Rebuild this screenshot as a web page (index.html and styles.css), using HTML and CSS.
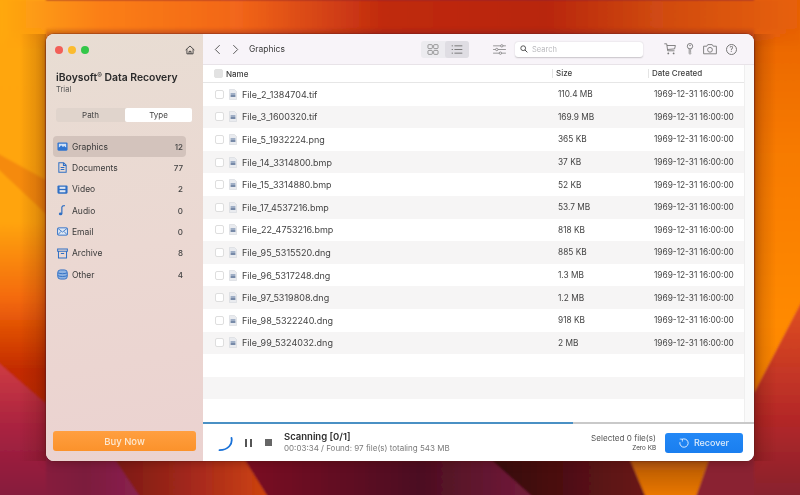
FILE: index.html
```html
<!DOCTYPE html>
<html lang="en">
<head>
<meta charset="utf-8">
<title>iBoysoft Data Recovery</title>
<link rel="stylesheet" href="styles.css">
</head>
<body>
<svg class="wallpaper" viewBox="0 0 800 495" preserveAspectRatio="none" aria-hidden="true">
  <defs>
    <linearGradient id="top" x1="0" x2="1" y1="0" y2="0">
      <stop offset="0" stop-color="#ffab10"/><stop offset=".13" stop-color="#fb7f16"/><stop offset=".3" stop-color="#f2661a"/><stop offset=".48" stop-color="#c02a10"/><stop offset=".68" stop-color="#b8260f"/><stop offset=".82" stop-color="#d04a12"/><stop offset="1" stop-color="#e86206"/>
    </linearGradient>
    <linearGradient id="fade" x1="0" x2="0" y1="0" y2="1">
      <stop offset=".55" stop-color="#fff"/><stop offset="1" stop-color="#000"/>
    </linearGradient>
    <mask id="topmask"><rect width="800" height="50" fill="url(#fade)"/></mask>
    <linearGradient id="left" x1="0" x2="0" y1="0" y2="1">
      <stop offset="0" stop-color="#ffa70c"/><stop offset=".45" stop-color="#ffa408"/><stop offset=".6" stop-color="#f46a08"/><stop offset=".74" stop-color="#c42c04"/><stop offset="1" stop-color="#a82004"/>
    </linearGradient>
    <linearGradient id="right" x1="0" x2="0" y1="0" y2="1">
      <stop offset="0" stop-color="#e66006"/><stop offset=".3" stop-color="#f77a04"/><stop offset=".65" stop-color="#ff8a02"/><stop offset="1" stop-color="#f58000"/>
    </linearGradient>
    <linearGradient id="pink" x1="0" x2="0" y1="0" y2="1">
      <stop offset="0" stop-color="#d03c44"/><stop offset=".5" stop-color="#a82240"/><stop offset="1" stop-color="#841a3c"/>
    </linearGradient>
    <linearGradient id="redright" x1="0" x2="0" y1="0" y2="1">
      <stop offset="0" stop-color="#e25020"/><stop offset=".6" stop-color="#b42828"/><stop offset="1" stop-color="#85202e"/>
    </linearGradient>
    <linearGradient id="wedge" x1="0" x2="0" y1="0" y2="1">
      <stop offset="0" stop-color="#a85208"/><stop offset="1" stop-color="#f27c04"/>
    </linearGradient>
    <linearGradient id="ember" x1="0" x2="1" y1="0" y2="0">
      <stop offset="0" stop-color="#7a1a14"/><stop offset=".55" stop-color="#a82a1c"/><stop offset="1" stop-color="#cf440e"/>
    </linearGradient>
    <linearGradient id="wine" x1="0" x2="1" y1="0" y2="0">
      <stop offset="0" stop-color="#7c0c24"/><stop offset=".6" stop-color="#4c0f20"/><stop offset="1" stop-color="#741c3c"/>
    </linearGradient>
    <linearGradient id="dark" x1="0" x2="1" y1="0" y2="0">
      <stop offset="0" stop-color="#320a0c"/><stop offset="1" stop-color="#6a1618"/>
    </linearGradient>
    <linearGradient id="magenta" x1="0" x2="1" y1="0" y2="0">
      <stop offset="0" stop-color="#861a3c"/><stop offset=".4" stop-color="#7c1a3c"/><stop offset="1" stop-color="#8a2250"/>
    </linearGradient>
    <linearGradient id="shadeL" x1="0" x2="1" y1="0" y2="0">
      <stop offset="0" stop-color="#4a1000" stop-opacity="0"/><stop offset="1" stop-color="#4a1000" stop-opacity=".22"/>
    </linearGradient>
    <linearGradient id="shadeR" x1="0" x2="1" y1="0" y2="0">
      <stop offset="0" stop-color="#4a1000" stop-opacity=".22"/><stop offset="1" stop-color="#4a1000" stop-opacity="0"/>
    </linearGradient>
    <filter id="soft" x="-2%" y="-2%" width="104%" height="104%"><feGaussianBlur stdDeviation=".8"/></filter>
  </defs>
  <g filter="url(#soft)">
    <rect x="-5" y="-5" width="51" height="505" fill="url(#left)"/>
    <rect x="754" y="-5" width="51" height="505" fill="url(#right)"/>
    <polygon points="-5,152 46,180 46,214 -5,166" fill="#f58a0c"/>
    <polygon points="-5,360 46,404 46,500 -5,500" fill="url(#pink)"/>
    <polygon points="805,295 805,500 754,500 754,393" fill="url(#redright)"/>
    <polygon points="46,455 112,455 142,500 46,500" fill="url(#magenta)"/>
    <polygon points="112,455 242,455 270,500 142,500" fill="url(#ember)"/>
    <polygon points="242,455 486,455 536,500 270,500" fill="url(#wine)"/>
    <polygon points="486,455 628,455 647,500 536,500" fill="url(#dark)"/>
    <polygon points="628,455 711,455 695,500 647,500" fill="url(#wedge)"/>
    <polygon points="711,455 754,455 754,500 695,500" fill="#8a2230"/>
    <rect x="-5" y="-5" width="810" height="55" fill="url(#top)" mask="url(#topmask)"/>
  </g>
  <rect x="20" y="34" width="26" height="427" fill="url(#shadeL)"/>
  <rect x="754" y="34" width="22" height="427" fill="url(#shadeR)"/>
</svg>

<main class="window">
  <aside class="sidebar">
    <div class="titlebar">
      <span class="lights"><i class="light red"></i><i class="light amber"></i><i class="light green"></i></span>
      <svg class="home" viewBox="0 0 12 12"><path d="M.8 6 6 1.2 11.2 6M2.3 5v5.6h7.4V5M4.8 10.6V7.6h2.4v3" fill="none" stroke="#333" stroke-width="1"/></svg>
    </div>
    <h1 class="app-name">iBoysoft<sup>®</sup> Data Recovery</h1>
    <p class="app-plan">Trial</p>
    <div class="tabs"><span class="tab">Path</span><span class="tab tab-on">Type</span></div>
    <nav class="nav">
      <a class="nav-item nav-on">
        <svg class="nav-icon" viewBox="0 0 12 12"><rect x=".5" y="1.5" width="11" height="9" rx="1.2" fill="#2f74d0"/><rect x="2" y="3" width="8" height="4" fill="#cfe0f6"/><path d="M2 7.5 4.5 4.5 6.5 6.5 8 5.5 10 7.5Z" fill="#2f74d0"/></svg>
        <span class="nav-label">Graphics</span><span class="nav-count">12</span>
      </a>
      <a class="nav-item">
        <svg class="nav-icon" viewBox="0 0 12 12"><path d="M2 .8h5.2L10 3.6v7.6H2ZM7 1v2.8h2.8M4 6h4M4 8.3h4" fill="none" stroke="#2f6fc4" stroke-width="1.1"/></svg>
        <span class="nav-label">Documents</span><span class="nav-count">77</span>
      </a>
      <a class="nav-item">
        <svg class="nav-icon" viewBox="0 0 12 12"><rect x=".5" y="1.5" width="11" height="9" rx="1.2" fill="#2f6fc4"/><rect x="2.8" y="3" width="6.4" height="2.3" fill="#dfe6f2"/><rect x="2.8" y="6.7" width="6.4" height="2.3" fill="#dfe6f2"/></svg>
        <span class="nav-label">Video</span><span class="nav-count">2</span>
      </a>
      <a class="nav-item">
        <svg class="nav-icon" viewBox="0 0 12 12"><path d="M5.3 9.6V2.4C5.6 1 7 .7 8.6.8" fill="none" stroke="#2f6fc4" stroke-width="1.3"/><ellipse cx="3.9" cy="9.7" rx="1.9" ry="1.5" fill="#2f6fc4"/></svg>
        <span class="nav-label">Audio</span><span class="nav-count">0</span>
      </a>
      <a class="nav-item">
        <svg class="nav-icon" viewBox="0 0 12 12"><rect x=".6" y="2" width="10.8" height="8" rx="1" fill="#dde6f3" stroke="#2f6fc4"/><path d="m1 2.6 5 4 5-4M1 9.6l3.3-3.7M11 9.6 7.7 5.9" fill="none" stroke="#2f6fc4" stroke-width=".9"/></svg>
        <span class="nav-label">Email</span><span class="nav-count">0</span>
      </a>
      <a class="nav-item">
        <svg class="nav-icon" viewBox="0 0 12 12"><path d="M.7 1.2h10.6v2.4H.7ZM1.6 3.6v7.2h8.8V3.6M4.2 6h3.6" fill="none" stroke="#2f6fc4" stroke-width="1.1"/></svg>
        <span class="nav-label">Archive</span><span class="nav-count">8</span>
      </a>
      <a class="nav-item">
        <svg class="nav-icon" viewBox="0 0 12 12"><rect x=".8" y="1" width="10.4" height="10" rx="3" fill="#8fb3e2" stroke="#2f6fc4"/><path d="M1 4.2c2.5 1.2 7.5 1.2 10 0M1 7.3c2.5 1.2 7.5 1.2 10 0" fill="none" stroke="#2f6fc4"/></svg>
        <span class="nav-label">Other</span><span class="nav-count">4</span>
      </a>
    </nav>
    <button class="buy">Buy Now</button>
  </aside>

  <section class="content">
    <header class="toolbar">
      <svg class="chev" viewBox="0 0 8 12"><path d="M6.5 1 1.5 6l5 5" fill="none" stroke="#555" stroke-width="1.1"/></svg>
      <svg class="chev chev-next" viewBox="0 0 8 12"><path d="m1.5 1 5 5-5 5" fill="none" stroke="#555" stroke-width="1.1"/></svg>
      <span class="crumb">Graphics</span>
      <div class="views">
        <span class="view"><svg class="view-icon" viewBox="0 0 12 12"><g fill="none" stroke="#777" stroke-width=".8"><rect x=".5" y=".7" width="4.8" height="4.3" rx="1"/><rect x="6.7" y=".7" width="4.8" height="4.3" rx="1"/><rect x=".5" y="7" width="4.8" height="4.3" rx="1"/><rect x="6.7" y="7" width="4.8" height="4.3" rx="1"/></g></svg></span>
        <span class="view view-on"><svg class="view-icon" viewBox="0 0 12 12"><path d="M3.2 2h8.6M3.2 6h8.6M3.2 10h8.6M.2 2h1.4M.2 6h1.4M.2 10h1.4" fill="none" stroke="#666" stroke-width=".9"/></svg></span>
      </div>
      <svg class="filter" viewBox="0 0 14 12"><path d="M0 2h14M0 6h14M0 10h14" stroke="#777" stroke-width=".8"/><circle cx="9.5" cy="2" r="1.3" fill="#f8f4f9" stroke="#777" stroke-width=".8"/><circle cx="4" cy="6" r="1.3" fill="#f8f4f9" stroke="#777" stroke-width=".8"/><circle cx="8" cy="10" r="1.3" fill="#f8f4f9" stroke="#777" stroke-width=".8"/></svg>
      <div class="search">
        <svg class="search-icon" viewBox="0 0 10 10"><circle cx="4" cy="4" r="3" fill="none" stroke="#444" stroke-width="1.1"/><path d="m6.2 6.2 3 3" stroke="#444" stroke-width="1.2"/></svg>
        <span class="search-text">Search</span>
      </div>
      <div class="actions">
        <svg class="act act-cart" viewBox="0 0 12 12"><path d="M.3.8h2.4l1 7h6.8M3 2.5h8.4l-.8 3.4-7 .6" fill="none" stroke="#777" stroke-width=".9"/><circle cx="4.3" cy="10.4" r=".9" fill="#777"/><circle cx="9.6" cy="10.4" r=".9" fill="#777"/></svg>
        <svg class="act act-key" viewBox="0 0 8 12"><circle cx="4" cy="3.2" r="2.7" fill="none" stroke="#777" stroke-width=".9"/><circle cx="4" cy="2.5" r=".7" fill="#777"/><path d="M3.2 5.8v4.6l.8.9.8-.9V9.6L4.2 9l.6-.6-.6-.6.6-.6v-1" fill="none" stroke="#777" stroke-width=".8"/></svg>
        <svg class="act act-cam" viewBox="0 0 14 12"><path d="M.6 3.2h3.2l1-1.6h4.4l1 1.6h3.2v7.6H.6Z" fill="none" stroke="#777" stroke-width=".9"/><circle cx="7" cy="6.8" r="2.4" fill="none" stroke="#777" stroke-width=".9"/></svg>
        <span class="act-help">?</span>
      </div>
    </header>

    <div class="table-area">
      <div class="table">
        <div class="thead">
          <span class="cell-name"><i class="check check-head"></i>Name</span>
          <span class="cell-size">Size</span>
          <span class="cell-date">Date Created</span>
        </div>
        <div class="tbody">
          <div class="row"><span class="cell-name"><i class="check"></i><svg class="file"><use href="#fileicon"/></svg>File_2_1384704.tif</span><span class="cell-size">110.4 MB</span><span class="cell-date">1969-12-31 16:00:00</span></div>
          <div class="row"><span class="cell-name"><i class="check"></i><svg class="file"><use href="#fileicon"/></svg>File_3_1600320.tif</span><span class="cell-size">169.9 MB</span><span class="cell-date">1969-12-31 16:00:00</span></div>
          <div class="row"><span class="cell-name"><i class="check"></i><svg class="file"><use href="#fileicon"/></svg>File_5_1932224.png</span><span class="cell-size">365 KB</span><span class="cell-date">1969-12-31 16:00:00</span></div>
          <div class="row"><span class="cell-name"><i class="check"></i><svg class="file"><use href="#fileicon"/></svg>File_14_3314800.bmp</span><span class="cell-size">37 KB</span><span class="cell-date">1969-12-31 16:00:00</span></div>
          <div class="row"><span class="cell-name"><i class="check"></i><svg class="file"><use href="#fileicon"/></svg>File_15_3314880.bmp</span><span class="cell-size">52 KB</span><span class="cell-date">1969-12-31 16:00:00</span></div>
          <div class="row"><span class="cell-name"><i class="check"></i><svg class="file"><use href="#fileicon"/></svg>File_17_4537216.bmp</span><span class="cell-size">53.7 MB</span><span class="cell-date">1969-12-31 16:00:00</span></div>
          <div class="row"><span class="cell-name"><i class="check"></i><svg class="file"><use href="#fileicon"/></svg>File_22_4753216.bmp</span><span class="cell-size">818 KB</span><span class="cell-date">1969-12-31 16:00:00</span></div>
          <div class="row"><span class="cell-name"><i class="check"></i><svg class="file"><use href="#fileicon"/></svg>File_95_5315520.dng</span><span class="cell-size">885 KB</span><span class="cell-date">1969-12-31 16:00:00</span></div>
          <div class="row"><span class="cell-name"><i class="check"></i><svg class="file"><use href="#fileicon"/></svg>File_96_5317248.dng</span><span class="cell-size">1.3 MB</span><span class="cell-date">1969-12-31 16:00:00</span></div>
          <div class="row"><span class="cell-name"><i class="check"></i><svg class="file"><use href="#fileicon"/></svg>File_97_5319808.dng</span><span class="cell-size">1.2 MB</span><span class="cell-date">1969-12-31 16:00:00</span></div>
          <div class="row"><span class="cell-name"><i class="check"></i><svg class="file"><use href="#fileicon"/></svg>File_98_5322240.dng</span><span class="cell-size">918 KB</span><span class="cell-date">1969-12-31 16:00:00</span></div>
          <div class="row"><span class="cell-name"><i class="check"></i><svg class="file"><use href="#fileicon"/></svg>File_99_5324032.dng</span><span class="cell-size">2 MB</span><span class="cell-date">1969-12-31 16:00:00</span></div>
          <div class="row"></div>
          <div class="row"></div>
          <div class="row"></div>
        </div>
      </div>
      <div class="gutter"></div>
    </div>

    <div class="progress"><div class="progress-fill"></div></div>

    <footer class="footer">
      <svg class="spinner" viewBox="0 0 16 16"><path d="M15 1.5c1.2 6-3 12-12 12.2" transform="translate(-.5 .5)" fill="none" stroke="#1a72d8" stroke-width="1.8" stroke-linecap="round"/></svg>
      <span class="pause"></span>
      <span class="stop"></span>
      <div class="scan">
        <strong class="scan-title">Scanning [0/1]</strong>
        <span class="scan-sub">00:03:34 / Found: 97 file(s) totaling 543 MB</span>
      </div>
      <div class="selected">
        <span class="selected-count">Selected 0 file(s)</span>
        <span class="selected-size">Zero KB</span>
      </div>
      <button class="recover">
        <svg class="recover-icon" viewBox="0 0 12 12"><path d="M3.2 1.9A5 5 0 1 1 1.1 5" fill="none" stroke="#fff" stroke-width="1"/><path d="M.9 1.3h3.2v3" fill="none" stroke="#fff" stroke-width=".8"/></svg>
        Recover
      </button>
    </footer>
  </section>
</main>

<svg class="defs" aria-hidden="true">
  <symbol id="fileicon" viewBox="0 0 8 11"><path d="M.5.5h5l2 2v8h-7Z" fill="#e9ebef" stroke="#d4d6dc" stroke-width=".6"/><rect x="1.6" y="4.4" width="4.8" height="1.2" fill="#6f87aa"/><rect x="1.6" y="6.3" width="4.8" height="1.4" fill="#47618a"/></symbol>
</svg>
</body>
</html>
```

FILE: styles.css
```css
* { box-sizing: border-box; }

html, body { height: 100%; }

body {
  margin: 0;
  padding: 34px 46px;
  position: relative;
  overflow: hidden;
  font-family: "Inter", "Liberation Sans", sans-serif;
  color: #333;
  background: #8a2230;
}

.wallpaper {
  position: absolute;
  inset: 0;
  width: 100%;
  height: 100%;
}

.defs { position: absolute; width: 0; height: 0; }

.window {
  position: relative;
  display: flex;
  width: 708px;
  height: 427px;
  border-radius: 8px;
  overflow: hidden;
  background: #fff;
  box-shadow: 0 0 0 .5px rgba(90, 30, 20, .5), 0 2px 10px rgba(60, 10, 0, .35);
  filter: blur(.25px);
}

/* Sidebar */
.sidebar {
  width: 157px;
  flex: none;
  display: flex;
  flex-direction: column;
  padding: 0 7px 10px;
  background: linear-gradient(170deg, #e8ddd3 0%, #ebd8d2 50%, #ebd2d0 100%);
}

.titlebar {
  display: flex;
  align-items: center;
  justify-content: space-between;
  height: 15px;
  margin-top: 8px;
  padding: 0 1px 0 2px;
}

.lights { display: flex; gap: 5px; }

.light { width: 8px; height: 8px; border-radius: 50%; }
.red { background: #f25f58; }
.amber { background: #fbbb2e; }
.green { background: #33c748; }

.home { width: 10px; height: 10px; }

.app-name {
  margin: 14px 0 0 3px;
  font-size: 10.4px;
  line-height: 13px;
  font-weight: 600;
  color: #2b2b2b;
  white-space: nowrap;
}

.app-name sup { font-size: 7px; line-height: 0; vertical-align: 3px; }

.app-plan {
  margin: 1px 0 0 3px;
  font-size: 7.5px;
  line-height: 10px;
  color: #555;
}

.tabs {
  display: flex;
  margin: 13px 4px 0 3px;
  height: 14px;
  border-radius: 3px;
  background: #e0d4cc;
}

.tab {
  flex: 1;
  text-align: center;
  font-size: 8px;
  line-height: 14px;
  color: #444;
}

.tab-on { background: #fff; border-radius: 2px; flex: none; width: 67px; }

.nav { display: flex; flex-direction: column; margin-top: 14px; width: 133px; }

.nav-item {
  display: flex;
  align-items: center;
  height: 21.33px;
  padding: 0 3px 0 4px;
  border-radius: 4px;
  font-size: 8.5px;
  color: #3a3a3a;
}

.nav-on { background: #d3c3bc; }

.nav-icon { width: 11px; height: 11px; flex: none; margin-right: 4px; }

.nav-label { flex: 1; }

.nav-count { font-size: 8px; color: #444; font-weight: 500; }

.buy {
  margin-top: auto;
  width: 143px;
  height: 20px;
  border: 0;
  border-radius: 3px;
  background: linear-gradient(#ff9f40, #fb922b);
  color: #fde8d0;
  font: 500 9.5px "Inter", "Liberation Sans", sans-serif;
}

/* Content */
.content { flex: 1; min-width: 0; display: flex; flex-direction: column; }

.toolbar {
  height: 31px;
  flex: none;
  display: flex;
  align-items: center;
  padding-left: 11px;
  background: #f8f4f9;
  border-bottom: 1px solid #e8e3e8;
}

.chev { width: 7px; height: 11px; flex: none; }
.chev-next { margin-left: 11px; }

.crumb { margin-left: 10px; font-size: 8.5px; width: 172px; flex: none; color: #3a3a3a; }

.views {
  display: flex;
  height: 17px;
  width: 48px;
  flex: none;
  border-radius: 3px;
  background: #ecebef;
}

.view { flex: 1; display: flex; align-items: center; justify-content: center; border-radius: 3px; }
.view-on { background: #dfdde3; }
.view-icon { width: 12px; height: 11px; }

.filter { width: 13px; height: 11px; margin-left: 24px; flex: none; }

.search {
  display: flex;
  align-items: center;
  width: 128px;
  height: 15px;
  margin-left: 9px;
  padding-left: 5px;
  flex: none;
  background: #fff;
  border-radius: 3px;
  box-shadow: 0 .5px 1.5px rgba(0, 0, 0, .2);
}

.search-icon { width: 8px; height: 8px; flex: none; }
.search-text { margin-left: 4px; font-size: 7.5px; color: #b9b9bd; }

.actions { display: flex; align-items: center; margin-left: 21px; }

.act { flex: none; height: 12px; }
.act-cart { width: 12px; }
.act-key { width: 8px; margin-left: 10px; }
.act-cam { width: 14px; margin-left: 9px; }

.act-help {
  width: 11px;
  height: 11px;
  margin-left: 9px;
  border: .8px solid #777;
  border-radius: 50%;
  font-size: 7.5px;
  line-height: 10px;
  text-align: center;
  color: #666;
}

.table-area { flex: 1; min-height: 0; display: flex; }

.table { width: 541px; flex: none; }

.gutter { flex: 1; background: #fafafa; border-left: 1px solid #efefef; }

.thead, .row {
  display: grid;
  grid-template-columns: 349px 96px 96px;
  align-items: center;
}

.thead {
  height: 18px;
  font-size: 8px;
  font-weight: 500;
  color: #3d3d3d;
  background: #fff;
  border-bottom: 1px solid #e6e6e6;
}

.thead .cell-size, .thead .cell-date {
  padding-left: 3px;
  border-left: 1px solid #e4e4e4;
  line-height: 9px;
}

.cell-name { display: flex; align-items: center; }

.thead .cell-name { padding-left: 11px; }

.tbody { display: grid; grid-auto-rows: 22.6px; }

.row { font-size: 8.5px; color: #444; }
.row:nth-child(even) { background: #f6f5f5; }
.row .cell-name { padding-left: 12px; font-size: 9px; }
.row .cell-size { padding-left: 6px; font-size: 8.3px; }
.row .cell-date { padding-left: 6px; font-size: 8.3px; }

.check {
  width: 9px;
  height: 9px;
  flex: none;
  margin-right: 5px;
  border: 1px solid #dedede;
  border-radius: 2px;
  background: #fff;
}

.check-head { margin-right: 3px; background: #e2e2e2; border-color: #e2e2e2; }

.file { width: 8px; height: 11px; flex: none; margin-right: 5px; }

.progress { height: 2px; flex: none; background: #c9c9c9; }
.progress-fill { width: 370px; height: 100%; background: #4a90c4; }

.footer {
  flex: none;
  height: 37px;
  display: flex;
  align-items: center;
  padding: 0 11px 0 14px;
  background: #fff;
}

.spinner { width: 16px; height: 16px; flex: none; margin-top: 2px; }

.pause {
  width: 7px;
  height: 8px;
  margin-left: 12px;
  flex: none;
  border-left: 2.6px solid #555;
  border-right: 2.6px solid #555;
}

.stop { width: 7px; height: 7px; margin-left: 13px; flex: none; background: #666; }

.scan { display: flex; flex-direction: column; margin-left: 12px; flex: 1; }

.scan-title { font-size: 9.5px; line-height: 12px; font-weight: 600; color: #2e2e2e; }
.scan-sub { font-size: 8px; line-height: 11px; color: #7a7a7a; }

.selected { display: flex; flex-direction: column; align-items: flex-end; margin-right: 9px; }

.selected-count { font-size: 8.1px; line-height: 12px; color: #555; }
.selected-size { font-size: 6.3px; line-height: 9px; color: #444; }

.recover {
  display: flex;
  align-items: center;
  justify-content: center;
  width: 78px;
  height: 20px;
  border: 0;
  border-radius: 3px;
  background: linear-gradient(#2388f6, #1a7eef);
  color: #dcebfb;
  font: 500 9px "Inter", "Liberation Sans", sans-serif;
}

.recover-icon { width: 10px; height: 10px; margin-right: 5px; }
```
